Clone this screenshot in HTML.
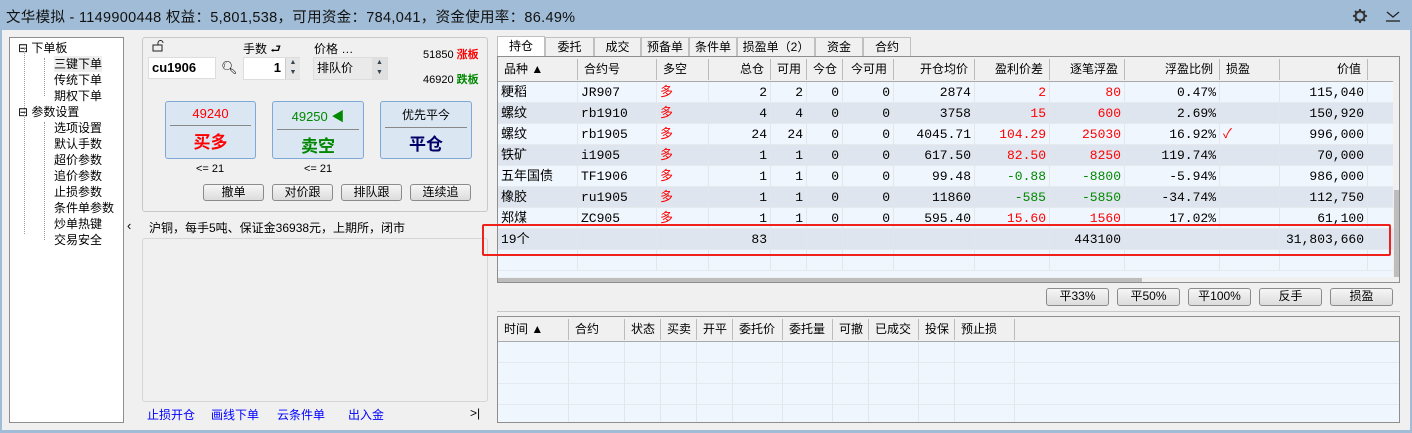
<!DOCTYPE html>
<html><head><meta charset="utf-8"><style>
*{box-sizing:border-box;margin:0;padding:0}
body{width:1412px;height:433px;overflow:hidden;background:#a0bcd6;font-family:"Liberation Sans","Noto Sans CJK SC",sans-serif;font-size:12px;color:#000;position:relative}
.a{position:absolute}
#main{left:2px;top:30px;width:1408px;height:400px;background:#f0f0f0}
.title{left:6px;top:6px;font-size:14.5px;color:#111;letter-spacing:0.3px}
.tree{left:9px;top:37px;width:115px;height:386px;background:#fff;border:1px solid #8e8e8e}
.tree div{position:absolute;font-size:12px;line-height:16px}
.box{border:1px solid #c8c8c8;border-radius:3px;background:#f0f0f0}
.inp{background:#fff;border:1px solid #ddd}
.bb{border:1px solid #7fa8d6;border-radius:3px;background:#dbe6f3;text-align:center}
.sb{border:1px solid #8b8b8b;border-radius:3px;background:linear-gradient(#f6f6f6,#dcdcdc);text-align:center;line-height:15px;font-size:12px}
.tab{top:37px;height:19px;border:1px solid #c0c0c0;border-bottom:none;background:#f0f0f0;text-align:center;line-height:18px;font-size:12px}
.grid{background:#f0f6fd;border:1px solid #8e8e8e;overflow:hidden}
.cell{position:absolute;font-size:13px;line-height:21px;white-space:nowrap}
.m{font-family:"Liberation Mono","Noto Sans CJK SC",monospace}
.r{color:#f00}.g{color:#080}
</style></head><body>
<div class="a title">文华模拟 - 1149900448  权益：5,801,538，可用资金：784,041，资金使用率：86.49%</div>
<svg class="a" style="left:1352px;top:8px" width="16" height="16" viewBox="0 0 16 16"><circle cx="8" cy="8" r="4.5" fill="none" stroke="#333" stroke-width="2"/><g stroke="#333" stroke-width="2"><path d="M8 1v3M8 12v3M1 8h3M12 8h3M3 3l2 2M11 11l2 2M3 13l2-2M11 5l2-2"/></g></svg>
<svg class="a" style="left:1386px;top:10px" width="14" height="12"><path d="M1 2l6 5 6-5" fill="none" stroke="#222" stroke-width="1.3"/><path d="M0 11h14" stroke="#222" stroke-width="1.3"/></svg>
<div class="a" id="main"></div>
<div class="a tree">
<div style="left:8px;top:2px">⊟ 下单板</div>
<div style="left:44px;top:18px;background:#eee">三键下单</div>
<div style="left:44px;top:34px">传统下单</div>
<div style="left:44px;top:50px">期权下单</div>
<div style="left:8px;top:66px">⊟ 参数设置</div>
<div style="left:44px;top:82px">选项设置</div>
<div style="left:44px;top:98px">默认手数</div>
<div style="left:44px;top:114px">超价参数</div>
<div style="left:44px;top:130px">追价参数</div>
<div style="left:44px;top:146px">止损参数</div>
<div style="left:44px;top:162px">条件单参数</div>
<div style="left:44px;top:178px">炒单热键</div>
<div style="left:44px;top:194px">交易安全</div>
<div style="left:14px;top:10px;width:1px;height:186px;border-left:1px dotted #999"></div>
<div style="left:34px;top:20px;width:1px;height:38px;border-left:1px dotted #999"></div>
<div style="left:34px;top:84px;width:1px;height:118px;border-left:1px dotted #999"></div>
</div>
<div class="a box" style="left:142px;top:37px;width:346px;height:175px"></div>
<svg class="a" style="left:152px;top:40px" width="12" height="12"><rect x="1" y="5" width="9" height="6" fill="none" stroke="#222"/><path d="M6 5V3a2.5 2.5 0 0 1 5 0" fill="none" stroke="#222"/></svg>
<div class="a" style="left:243px;top:40px">手数 ⮐</div>
<div class="a" style="left:314px;top:40px">价格 …</div>
<div class="a inp" style="left:148px;top:57px;width:68px;height:22px;font-size:13px;font-weight:bold;padding:2px 3px">cu1906</div>
<div class="a" style="left:221px;top:60px;font-size:13px">🔍︎</div>
<div class="a inp" style="left:243px;top:57px;width:57px;height:23px;font-weight:bold;font-size:13px;text-align:right;padding:2px 18px 0 0">1</div>
<div class="a" style="left:285px;top:58px;width:15px;height:21px;background:#e6e6e6;border-left:1px solid #ccc;font-size:7px;line-height:10px;text-align:center;color:#345">▲<br>▼</div>
<div class="a" style="left:313px;top:57px;width:75px;height:23px;background:#eaeaea;border:1px solid #ddd;padding:1px 3px">排队价</div>
<div class="a" style="left:372px;top:58px;width:15px;height:21px;background:#e0e0e0;font-size:7px;line-height:10px;text-align:center;color:#345">▲<br>▼</div>
<div class="a" style="left:423px;top:46px;font-size:11px">51850 <b class="r">涨板</b></div>
<div class="a" style="left:423px;top:71px;font-size:11px">46920 <b class="g">跌板</b></div>
<div class="a bb" style="left:165px;top:101px;width:91px;height:58px"><div style="color:#f00;font-size:13px;margin-top:4px">49240</div><div style="border-top:1px solid #888;margin:4px 4px 0"></div><div style="color:#f00;font-size:17px;font-weight:bold;margin-top:2px">买多</div></div>
<div class="a bb" style="left:272px;top:101px;width:92px;height:58px"><div style="color:#080;font-size:13px;margin-top:4px">49250 ◀</div><div style="border-top:1px solid #888;margin:4px 4px 0"></div><div style="color:#080;font-size:17px;font-weight:bold;margin-top:2px">卖空</div></div>
<div class="a bb" style="left:380px;top:101px;width:92px;height:58px"><div style="font-size:12px;margin-top:4px">优先平今</div><div style="border-top:1px solid #888;margin:4px 4px 0"></div><div style="color:#006;font-size:17px;font-weight:bold;margin-top:2px">平仓</div></div>
<div class="a" style="left:196px;top:163px;font-size:11px">&lt;= 21</div>
<div class="a" style="left:304px;top:163px;font-size:11px">&lt;= 21</div>
<div class="a sb" style="left:203px;top:184px;width:61px;height:17px">撤单</div>
<div class="a sb" style="left:272px;top:184px;width:61px;height:17px">对价跟</div>
<div class="a sb" style="left:341px;top:184px;width:61px;height:17px">排队跟</div>
<div class="a sb" style="left:410px;top:184px;width:61px;height:17px">连续追</div>
<div class="a" style="left:127px;top:218px;font-size:13px">‹</div>
<div class="a" style="left:149px;top:219px">沪铜，每手5吨、保证金36938元，上期所，闭市</div>
<div class="a box" style="left:142px;top:238px;width:346px;height:164px;border-color:#d6d6d6"></div>
<div class="a" style="left:147px;top:406px;color:#00f">止损开仓</div>
<div class="a" style="left:211px;top:406px;color:#00f">画线下单</div>
<div class="a" style="left:277px;top:406px;color:#00f">云条件单</div>
<div class="a" style="left:348px;top:406px;color:#00f">出入金</div>
<div class="a" style="left:470px;top:406px">&gt;|</div>
<div class="a tab" style="left:497px;width:48px;background:#fff;top:36px;height:20px">持仓</div>
<div class="a tab" style="left:545px;width:49px">委托</div>
<div class="a tab" style="left:594px;width:47px">成交</div>
<div class="a tab" style="left:641px;width:48px">预备单</div>
<div class="a tab" style="left:689px;width:48px">条件单</div>
<div class="a tab" style="left:737px;width:78px">损盈单（2）</div>
<div class="a tab" style="left:815px;width:48px">资金</div>
<div class="a tab" style="left:863px;width:48px">合约</div>
<div class="a grid" style="left:497px;top:56px;width:903px;height:227px" id="g1"></div>
<div class="a grid" style="left:497px;top:316px;width:903px;height:107px" id="g2"></div>
<div class="a sb" style="left:1046px;top:288px;width:63px;height:18px">平33%</div>
<div class="a sb" style="left:1117px;top:288px;width:63px;height:18px">平50%</div>
<div class="a sb" style="left:1188px;top:288px;width:63px;height:18px">平100%</div>
<div class="a sb" style="left:1259px;top:288px;width:63px;height:18px">反手</div>
<div class="a sb" style="left:1330px;top:288px;width:63px;height:18px">损盈</div>
<div class="a" style="left:497px;top:311px;width:903px;border-top:1px solid #c8c8c8"></div>
<div class="a" style="left:482px;top:224px;width:909px;height:32px;border:2px solid #f0201a;border-radius:2px"></div>
<script>
function build(g,top,cols,head,rows,nrows){
 var el=document.getElementById(g),h='';
 h+='<div class="a" style="left:0;top:0;width:100%;height:25px;background:#f0f0f0;border-bottom:1px solid #aaa"></div>';
 var x=0;
 for(var i=0;i<cols.length;i++){var w=cols[i][0];
  h+='<div class="cell" style="left:'+(x)+'px;top:2px;width:'+w+'px;padding:0 6px;text-align:'+(cols[i][1]?'right':'left')+';border-right:1px solid #bbb;line-height:21px;font-size:12px">'+head[i]+'</div>';
  x+=w;}
 for(var r=0;r<nrows;r++){var y=25+r*21;var bg=(r%2)?'#dfe5ee':'#f0f6fd';
  if(r>=rows.length) bg='#f0f6fd';
  h+='<div class="a" style="left:0;top:'+y+'px;width:100%;height:21px;background:'+bg+';border-bottom:1px solid #e6e9ee"></div>';
  x=0;
  for(var i=0;i<cols.length;i++){var w=cols[i][0];var v=rows[r]?rows[r][i]:'';var cls='';
   if(typeof v=='object'&&v){cls=v[1];v=v[0];}
   if(v===undefined||v===null)v='';
   h+='<div class="cell m '+cls+'" style="left:'+x+'px;top:'+y+'px;width:'+w+'px;height:21px;padding:0 3px;text-align:'+(cols[i][1]?'right':'left')+';border-right:1px solid #e3e6ea">'+v+'</div>';
   x+=w;}
 }
 el.innerHTML=h;
}
var c1=[[80,0],[79,0],[52,0],[62,1],[36,1],[36,1],[51,1],[81,1],[75,1],[75,1],[95,1],[60,0],[88,1]];
var h1=['品种 ▲','合约号','多空','总仓','可用','今仓','今可用','开仓均价','盈利价差','逐笔浮盈','浮盈比例','损盈','价值'];
var D=['多','r'];
var rows=[
['粳稻','JR907',D,2,2,0,0,'2874',['2','r'],['80','r'],'0.47%','','115,040'],
['螺纹','rb1910',D,4,4,0,0,'3758',['15','r'],['600','r'],'2.69%','','150,920'],
['螺纹','rb1905',D,24,24,0,0,'4045.71',['104.29','r'],['25030','r'],'16.92%',['✓','r'],'996,000'],
['铁矿','i1905',D,1,1,0,0,'617.50',['82.50','r'],['8250','r'],'119.74%','','70,000'],
['五年国债','TF1906',D,1,1,0,0,'99.48',['-0.88','g'],['-8800','g'],'-5.94%','','986,000'],
['橡胶','ru1905',D,1,1,0,0,'11860',['-585','g'],['-5850','g'],'-34.74%','','112,750'],
['郑煤','ZC905',D,1,1,0,0,'595.40',['15.60','r'],['1560','r'],'17.02%','','61,100'],
['19个','','',83,'','','','','','443100','','','31,803,660']];
build('g1',56,c1,h1,rows,9);
var c2=[[71,0],[56,0],[36,0],[36,0],[36,0],[50,0],[50,0],[36,0],[50,0],[36,0],[60,0]];
var h2=['时间 ▲','合约','状态','买卖','开平','委托价','委托量','可撤','已成交','投保','预止损'];
build('g2',316,c2,h2,[],4);
var g1=document.getElementById('g1');
g1.insertAdjacentHTML('beforeend','<div class="a" style="left:0;top:220px;width:100%;height:7px;background:#f0f0f0"></div><div class="a" style="left:0;top:221px;width:644px;height:5px;background:#bdbdbd"></div><div class="a" style="left:895px;top:0;width:8px;height:220px;background:#f0f0f0"></div><div class="a" style="left:896px;top:133px;width:6px;height:87px;background:#bdbdbd"></div>');
</script>
</body></html>
